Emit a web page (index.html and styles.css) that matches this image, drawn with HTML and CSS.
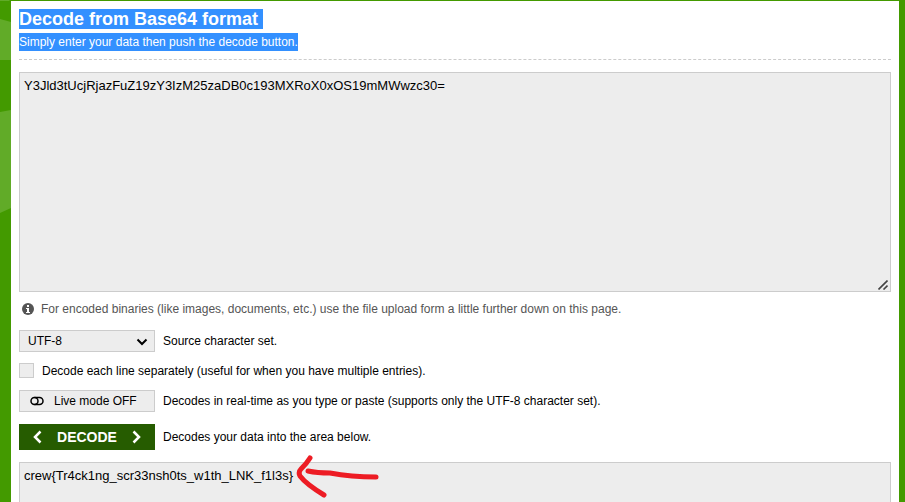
FILE: index.html
```html
<!DOCTYPE html>
<html lang="en">
<head>
<meta charset="utf-8">
<title>Base64 Decode</title>
<link rel="stylesheet" href="styles.css">
</head>
<body>
<svg class="backdrop" width="40" height="213" viewBox="0 0 40 213" aria-hidden="true">
  <path d="M0 0H10L9 1H0ZM0 19L11 22V60H0ZM0 112L11 110V208L0 213Z"/>
</svg>
<main class="card">
  <header class="intro">
    <h1 class="title"><span class="selected selected-line">Decode from Base64 format</span></h1>
    <p class="subtitle"><span class="selected">Simply enter your data then push the decode button.</span></p>
  </header>
  <form class="decoder">
    <div class="input-area">
      <textarea class="field source" aria-label="Data to decode" spellcheck="false">Y3Jld3tUcjRjazFuZ19zY3IzM25zaDB0c193MXRoX0xOS19mMWwzc30=</textarea>
      <svg class="grip" width="10" height="10" viewBox="0 0 10 10" aria-hidden="true"><path d="M.5 9.5L9.5 .5M5.500 9.500L9.500 5.500"/></svg>
    </div>
    <p class="hint">
      <svg width="12" height="12" viewBox="0 0 12 12" aria-hidden="true"><circle cx="6" cy="6" r="6" fill="#555"/><path d="M5 2h2v2H5zM4 5h3v4h1v1H4V9h1V6H4z" fill="#fff"/></svg>
      For encoded binaries (like images, documents, etc.) use the file upload form a little further down on this page.
    </p>
    <div class="row">
      <span class="select-wrap">
        <select class="control" id="charset"><option>UTF-8</option></select>
        <svg class="chevron" width="12" height="8" viewBox="0 0 12 8" aria-hidden="true"><path d="M1.500 1.500L6 6L10.500 1.500"/></svg>
      </span>
      <label for="charset">Source character set.</label>
    </div>
    <div class="row row-check">
      <input class="check" type="checkbox" id="lines">
      <label for="lines">Decode each line separately (useful for when you have multiple entries).</label>
    </div>
    <div class="row">
      <button class="control live" type="button">
        <svg width="14" height="10" viewBox="0 0 14 10" aria-hidden="true"><path d="M4.500 1.500H9.500A3.500 3.500 0 0 1 9.500 8.500H4.500"/><circle cx="4.500" cy="5" r="3.500"/></svg>
        Live mode OFF
      </button>
      <span>Decodes in real-time as you type or paste (supports only the UTF-8 character set).</span>
    </div>
    <div class="row">
      <button class="decode" type="button">
        <svg width="9" height="14" viewBox="0 0 9 14" aria-hidden="true"><path d="M7.500 1.500L2 7L7.500 12.500"/></svg>
        DECODE
        <svg width="9" height="14" viewBox="0 0 9 14" aria-hidden="true"><path d="M1.500 1.500L7 7L1.500 12.500"/></svg>
      </button>
      <span>Decodes your data into the area below.</span>
    </div>
    <div class="output-area">
      <textarea class="field output" aria-label="Decoded data" spellcheck="false" readonly>crew{Tr4ck1ng_scr33nsh0ts_w1th_LNK_f1l3s}</textarea>
      <svg class="arrow" width="86" height="46" viewBox="0 0 86 46" aria-hidden="true"><path d="M14 4Q11 9 5 15Q2 18 4 22Q10 30 28 41M12 17Q21 19 34 19Q55 23 80 23"/></svg>
    </div>
  </form>
</main>
</body>
</html>
```
FILE: styles.css
```css
* { box-sizing: border-box; }

body {
  margin: 0;
  height: 100vh;
  padding: 1px 6px 0 11px;
  overflow: hidden;
  background: #439a00;
  color: #000;
  font: 12px/18px "Liberation Sans", Arial, sans-serif;
}

.backdrop {
  position: absolute;
  top: 0;
  left: 0;
  fill: #61ab28;
}

.card {
  position: relative;
  display: flex;
  flex-direction: column;
  height: 100%;
  padding: 8px 8px 0;
  background: #fff;
}

.intro {
  padding-bottom: 8px;
  border-bottom: 1px dashed #ccc;
}

.title, .subtitle, .hint { margin: 0; }

.title {
  display: flex;
  margin-bottom: 4px;
  font-size: 18px;
  line-height: 20px;
}

.subtitle { display: flex; }

.selected {
  background: #3390ff;
  color: #fff;
}

.selected-line { padding-right: 5px; }

.decoder {
  display: flex;
  flex: 1;
  flex-direction: column;
  gap: 12px;
  padding-top: 12px;
}

.input-area, .output-area {
  position: relative;
  display: flex;
}

.output-area { flex: 1; }

.field {
  width: 100%;
  margin: 0;
  padding: 4px;
  border: 1px solid #ccc;
  border-radius: 0;
  outline: 0;
  background: #ededed;
  color: #000;
  font: 13px/18px "Liberation Sans", Arial, sans-serif;
  resize: none;
}

.source { height: 220px; }

.output { border-bottom: 0; }

.grip {
  position: absolute;
  right: 3px;
  bottom: 2px;
  fill: none;
  stroke: #444;
  stroke-width: 1.6;
}

.hint {
  display: flex;
  align-items: center;
  gap: 7px;
  height: 14px;
  padding: 0 3px;
  margin-top: -2px;
  margin-bottom: 2px;
  color: #555;
}

.row {
  display: flex;
  align-items: center;
  gap: 8px;
}

.row-check {
  height: 15px;
  margin-top: -1px;
}

.select-wrap { position: relative; display: flex; }

.control {
  width: 136px;
  height: 22px;
  margin: 0;
  padding: 0 8px;
  border: 1px solid #ccc;
  border-radius: 0;
  background: #ededed;
  color: #000;
  font: 12px/18px "Liberation Sans", Arial, sans-serif;
  appearance: none;
}

.chevron {
  position: absolute;
  top: 8px;
  right: 7px;
  fill: none;
  stroke: #000;
  stroke-width: 2;
}

.check {
  width: 15px;
  height: 15px;
  margin: 0;
  border: 1px solid #ccc;
  background: #ededed;
  appearance: none;
}

.live {
  display: flex;
  align-items: center;
  gap: 10px;
  padding: 0 10px;
}

.live svg {
  fill: none;
  stroke: #000;
  stroke-width: 1.5;
}

.decode {
  display: flex;
  align-items: center;
  justify-content: space-between;
  width: 136px;
  height: 26px;
  padding: 0 14px;
  border: 0;
  background: #265c00;
  color: #fff;
  font: bold 14px/18px "Liberation Sans", Arial, sans-serif;
}

.decode svg {
  fill: none;
  stroke: #fff;
  stroke-width: 2.5;
}

.arrow {
  position: absolute;
  top: -8px;
  left: 277px;
  fill: none;
  stroke: #ed1c24;
  stroke-width: 5;
  stroke-linecap: round;
  stroke-linejoin: round;
}
```
